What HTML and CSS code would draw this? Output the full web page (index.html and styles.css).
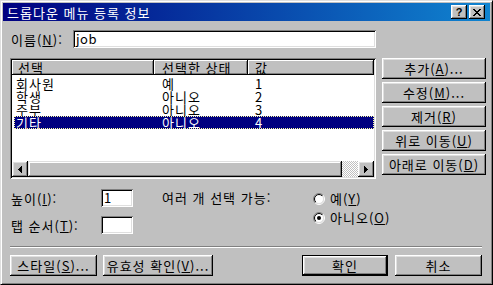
FILE: index.html
```html
<!DOCTYPE html>
<html lang="ko">
<head>
  <meta charset="UTF-8">
  <title>드롭다운 메뉴 등록 정보</title>
  <link rel="stylesheet" href="styles.css">
</head>
<body>

  <div class="window">
    <div class="titlebar">
      <span class="title">드롭다운 메뉴 등록 정보</span>
      <div class="cap-buttons">
        <button class="cap-btn help">?</button>
        <button class="cap-btn close">
          <svg width="8" height="7" viewBox="0 0 8 7" shape-rendering="crispEdges"><path d="M0 0h2v1H0zM6 0h2v1H6zM1 1h2v1H1zM5 1h2v1H5zM2 2h4v1H2zM3 3h2v1H3zM2 4h4v1H2zM1 5h2v1H1zM5 5h2v1H5zM0 6h2v1H0zM6 6h2v1H6z" fill="#000"/></svg>
        </button>
      </div>
    </div>

    <div class="content">
      <!-- Name -->
      <div class="name-row">
        <span class="name-label">이름(<u>N</u>):</span>
        <div class="field name-field">job</div>
      </div>

      <!-- List + side buttons -->
      <div class="main">
        <div class="listview">
          <div class="lv-head">
            <div class="lv-hcell c1">선택</div>
            <div class="lv-hcell c2">선택한 상태</div>
            <div class="lv-hcell c3">값</div>
          </div>
          <div class="lv-body">
            <div class="lv-row"><span class="c1">회사원</span><span class="c2">예</span><span class="c3">1</span></div>
            <div class="lv-row"><span class="c1">학생</span><span class="c2">아니오</span><span class="c3">2</span></div>
            <div class="lv-row"><span class="c1">주부</span><span class="c2">아니오</span><span class="c3">3</span></div>
            <div class="lv-row selected"><span class="c1">기타</span><span class="c2">아니오</span><span class="c3">4</span></div>
          </div>
          <div class="hscroll">
            <div class="sb-btn">
              <svg width="4" height="7" viewBox="0 0 4 7" shape-rendering="crispEdges"><path d="M3 0h1v7H3zM2 1h1v5H2zM1 2h1v3H1zM0 3h1v1H0z" fill="#000"/></svg>
            </div>
            <div class="sb-thumb"></div>
            <div class="sb-track"></div>
            <div class="sb-btn">
              <svg width="4" height="7" viewBox="0 0 4 7" shape-rendering="crispEdges"><path d="M0 0h1v7H0zM1 1h1v5H1zM2 2h1v3H2zM3 3h1v1H3z" fill="#000"/></svg>
            </div>
          </div>
        </div>

        <div class="side-buttons">
          <button class="btn">추가(<u>A</u>)...</button>
          <button class="btn">수정(<u>M</u>)...</button>
          <button class="btn">제거(<u>R</u>)</button>
          <button class="btn">위로 이동(<u>U</u>)</button>
          <button class="btn">아래로 이동(<u>D</u>)</button>
        </div>
      </div>

      <!-- Options -->
      <div class="options">
        <div class="fields">
          <div class="field-row">
            <span class="field-label">높이(<u>I</u>):</span>
            <div class="field small-field">1</div>
          </div>
          <div class="field-row">
            <span class="field-label">탭 순서(<u>T</u>):</span>
            <div class="field small-field"></div>
          </div>
        </div>
        <div class="multi-label">여러 개 선택 가능:</div>
        <div class="radios">
          <div class="radio">
            <svg width="12" height="12" viewBox="0 0 12 12">
              <defs>
                <linearGradient id="ringOuter" x1="0" y1="0" x2="1" y2="1">
                  <stop offset="0.5" stop-color="#808080"/><stop offset="0.5" stop-color="#fff"/>
                </linearGradient>
                <linearGradient id="ringInner" x1="0" y1="0" x2="1" y2="1">
                  <stop offset="0.5" stop-color="#000"/><stop offset="0.5" stop-color="#dfdfdf"/>
                </linearGradient>
              </defs>
              <circle cx="6" cy="6" r="5.5" fill="none" stroke="url(#ringOuter)"/>
              <circle cx="6" cy="6" r="4.5" fill="#fff" stroke="url(#ringInner)"/>
            </svg>
            <span>예(<u>Y</u>)</span>
          </div>
          <div class="radio">
            <svg width="12" height="12" viewBox="0 0 12 12">
              <circle cx="6" cy="6" r="5.5" fill="none" stroke="url(#ringOuter)"/>
              <circle cx="6" cy="6" r="4.5" fill="#fff" stroke="url(#ringInner)"/>
              <circle cx="6" cy="6" r="2" fill="#000"/>
            </svg>
            <span>아니오(<u>O</u>)</span>
          </div>
        </div>
      </div>

      <div class="separator"></div>

      <!-- Bottom buttons -->
      <div class="bottom-row">
        <button class="btn style-btn">스타일(<u>S</u>)...</button>
        <button class="btn valid-btn">유효성 확인(<u>V</u>)...</button>
        <button class="btn default ok-btn">확인</button>
        <button class="btn cancel-btn">취소</button>
      </div>
    </div>
  </div>

</body>
</html>
```

FILE: styles.css
```css
* {
  box-sizing: border-box;
}

body {
  margin: 0;
  background: #c0c0c0;
  font-family: "Noto Sans CJK KR", "Noto Sans", sans-serif;
  font-size: 13px;
  line-height: 13px;
  letter-spacing: 1px;
  color: #000;
}

u {
  text-decoration: underline;
  text-underline-offset: 1px;
}

.window {
  width: 493px;
  height: 285px;
  display: flex;
  flex-direction: column;
  padding: 2px;
  background: #c0c0c0;
  border: 1px solid;
  border-color: #dfdfdf #000 #000 #dfdfdf;
  box-shadow: inset 1px 1px #fff, inset -1px -1px #808080;
}

/* Title bar */
.titlebar {
  height: 18px;
  display: flex;
  align-items: center;
  padding: 0 5px 0 3px;
  background: linear-gradient(to right, #000080, #1084d0);
  color: #fff;
}

.title {
  padding-left: 1px;
}

.cap-buttons {
  margin-left: auto;
  display: flex;
  gap: 2px;
}

.cap-btn {
  width: 16px;
  height: 14px;
  padding: 0;
  border: none;
  display: flex;
  align-items: center;
  justify-content: center;
  background: #c0c0c0;
  box-shadow: inset -1px -1px #000, inset 1px 1px #fff, inset -2px -2px #808080, inset 2px 2px #dfdfdf;
}

.cap-btn.help {
  font-family: "Liberation Sans", Arial, sans-serif;
  font-weight: bold;
  font-size: 11px;
  line-height: 14px;
  letter-spacing: 0;
  padding-bottom: 1px;
}

/* Generic controls */
.btn {
  font: inherit;
  letter-spacing: inherit;
  color: #000;
  padding: 0;
  border: none;
  background: #c0c0c0;
  box-shadow: inset -1px -1px #000, inset 1px 1px #fff, inset -2px -2px #808080, inset 2px 2px #dfdfdf;
}

.btn.default {
  border: 1px solid #000;
}

.field {
  background: #fff;
  padding: 0 3px;
  line-height: 18px;
  letter-spacing: 0.5px;
  box-shadow: inset 1px 1px #808080, inset -1px -1px #fff, inset 2px 2px #000, inset -2px -2px #dfdfdf;
}

/* Content */
.content {
  flex: 1;
  padding: 9px 4px 0 7px;
}

.name-row {
  display: flex;
  align-items: center;
  height: 18px;
}

.name-label {
  width: 63px;
  padding-left: 1px;
}

.name-field {
  width: 303px;
  height: 18px;
}

.main {
  display: flex;
  gap: 6px;
  margin-top: 10px;
}

/* List view */
.listview {
  width: 366px;
  height: 121px;
  padding: 2px;
  display: flex;
  flex-direction: column;
  background: #fff;
  box-shadow: inset 1px 1px #808080, inset -1px -1px #fff, inset 2px 2px #000, inset -2px -2px #dfdfdf;
}

.lv-head {
  display: flex;
  height: 15px;
}

.lv-hcell {
  background: #c0c0c0;
  line-height: 15px;
  box-shadow: inset -1px -1px #000, inset 1px 1px #fff, inset -2px -2px #808080;
}

.lv-hcell.c1 {
  width: 142px;
  padding-left: 6px;
}

.lv-hcell.c2 {
  width: 94px;
  padding-left: 8px;
}

.lv-hcell.c3 {
  flex: 1;
  padding-left: 7px;
}

.lv-body {
  flex: 1;
  padding: 2px 0 0 2px;
}

.lv-row {
  display: flex;
  height: 13px;
  line-height: 13px;
}

.lv-row .c1 {
  width: 140px;
  padding-left: 2px;
}

.lv-row .c2 {
  width: 94px;
  padding-left: 8px;
}

.lv-row .c3 {
  flex: 1;
  padding-left: 7px;
}

.lv-row.selected {
  background: #000080;
  color: #fff;
  outline: 1px dotted #ffffa0;
  outline-offset: -1px;
}

/* Horizontal scrollbar */
.hscroll {
  display: flex;
  height: 16px;
}

.sb-btn {
  width: 16px;
  display: flex;
  align-items: center;
  justify-content: center;
  background: #c0c0c0;
  box-shadow: inset -1px -1px #000, inset 1px 1px #fff, inset -2px -2px #808080, inset 2px 2px #dfdfdf;
}

.sb-thumb {
  flex: 1;
  background: #c0c0c0;
  box-shadow: inset -1px -1px #000, inset 1px 1px #dfdfdf, inset -2px -2px #808080, inset 2px 2px #fff;
}

.sb-track {
  width: 16px;
  background: repeating-conic-gradient(#c0c0c0 0 25%, #fff 0 50%) 0 0 / 2px 2px;
}

/* Side buttons */
.side-buttons {
  display: flex;
  flex-direction: column;
  gap: 3px;
}

.side-buttons .btn {
  width: 104px;
  height: 21px;
}

/* Options */
.options {
  display: flex;
  margin-top: 10px;
}

.fields {
  display: flex;
  flex-direction: column;
  gap: 9px;
}

.field-row {
  display: flex;
  align-items: center;
  height: 18px;
}

.field-label {
  width: 91px;
  padding-left: 1px;
}

.small-field {
  width: 32px;
  height: 18px;
}

.multi-label {
  width: 151px;
  margin-left: 29px;
  line-height: 18px;
}

.radios {
  display: flex;
  flex-direction: column;
}

.radio {
  display: flex;
  align-items: center;
  gap: 5px;
  height: 19px;
}

/* Separator */
.separator {
  height: 2px;
  margin: 12px 4px 0 0;
  border-top: 1px solid #808080;
  border-bottom: 1px solid #fff;
}

/* Bottom buttons */
.bottom-row {
  display: flex;
  margin-top: 7px;
  padding-right: 4px;
}

.bottom-row .btn {
  height: 21px;
}

.style-btn {
  width: 87px;
}

.valid-btn {
  width: 110px;
  margin-left: 6px;
}

.ok-btn {
  width: 86px;
  margin-left: auto;
}

.cancel-btn {
  width: 87px;
  margin-left: 7px;
}
```
